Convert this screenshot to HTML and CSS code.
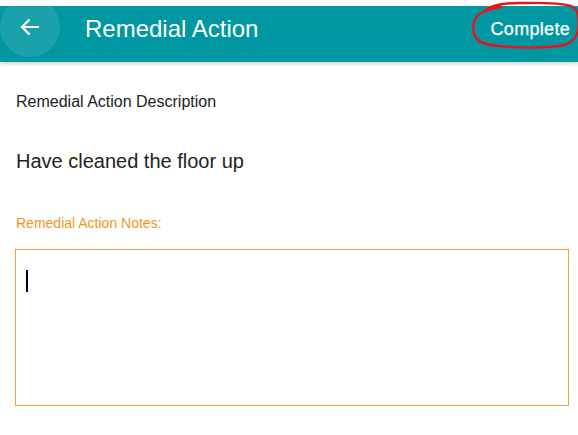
FILE: index.html
```html
<!DOCTYPE html>
<html>
<head>
<meta charset="utf-8">
<link rel="stylesheet" href="styles.css">
</head>
<body>
<div class="page">
  <header class="appbar">
    <button class="back" aria-label="Back">
      <svg width="20" height="18" viewBox="0 0 20 18"><path d="M19 9H2M9.5 1.5L2 9l7.5 7.5" fill="none" stroke="#fff" stroke-width="2.2"/></svg>
    </button>
    <h1 class="title">Remedial Action</h1>
    <span class="action">Complete</span>
  </header>
  <svg class="scribble" width="110" height="50" viewBox="0 0 110 50">
    <path d="M14 9 C22 4 34 2 48 2 C66 2 86 1 100 5 C108 8 108 18 107 28 C106 38 100 43 88 45 C70 47 46 47 28 45 C14 44 4 40 3 32 C1 24 3 16 10 12 C16 9 22 7 30 6" fill="none" stroke="#e8141b" stroke-width="2.4" stroke-linecap="round"/>
  </svg>
  <main class="content">
    <div class="label">Remedial Action Description</div>
    <div class="value">Have cleaned the floor up</div>
    <div class="notes-label">Remedial Action Notes:</div>
    <div class="notes"><span class="caret"></span></div>
  </main>
</div>
</body>
</html>
```

FILE: styles.css
```css
* { box-sizing: border-box; }
html, body { margin: 0; padding: 0; background: #fff; }
body {
  font-family: "Liberation Sans", Arial, sans-serif;
  width: 578px;
  height: 435px;
  overflow: hidden;
}
.page { position: relative; display: flex; flex-direction: column; padding-top: 6px; }
.appbar {
  height: 56px;
  background: #0097a2;
  display: flex;
  align-items: center;
  box-shadow: 0 2px 4px rgba(0,0,0,0.18);
  overflow: hidden;
}
.back {
  width: 60px;
  height: 60px;
  margin-top: -14px;
  border-radius: 50%;
  border: none;
  background: rgba(255,255,255,0.1);
  display: flex;
  align-items: center;
  justify-content: center;
  padding: 0;
  flex: none;
}
.title {
  margin: -11px 0 0 25px;
  font-size: 24px;
  font-weight: normal;
  color: #fff;
  flex: 1;
}
.action {
  color: #fff;
  font-size: 18px;
  font-weight: normal;
  -webkit-text-stroke: 0.25px #fff;
  letter-spacing: 0.3px;
  margin-right: 8px;
  margin-top: -10px;
}
.scribble {
  position: absolute;
  left: 471px;
  top: 1px;
  overflow: visible;
}
.content {
  display: flex;
  flex-direction: column;
  padding: 0 9px 0 15px;
}
.label {
  font-size: 16px;
  line-height: 20px;
  color: #222;
  margin-top: 30px;
  padding-left: 1px;
}
.value {
  font-size: 20px;
  line-height: 24px;
  color: #222;
  margin-top: 37px;
  padding-left: 1px;
}
.notes-label {
  font-size: 14px;
  line-height: 16px;
  color: #f7931e;
  margin-top: 42px;
  padding-left: 1px;
}
.notes {
  margin-top: 18px;
  height: 157px;
  border: 1px solid #f0a040;
  padding: 20px 10px;
}
.caret {
  display: block;
  width: 2px;
  height: 22px;
  background: #000;
}
```
